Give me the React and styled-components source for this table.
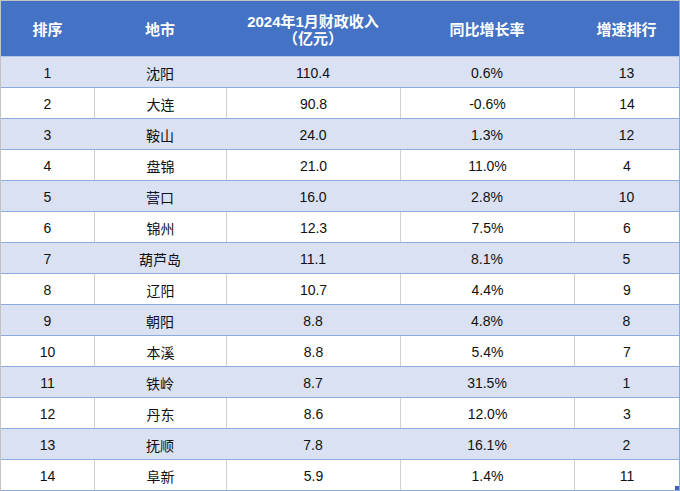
import React from "react";
import styled, { createGlobalStyle } from "styled-components";

const Global = createGlobalStyle`
  html, body { margin: 0; padding: 0; background: #ffffff; }
  body { font-family: "Liberation Sans", "Noto Sans CJK SC", sans-serif; }
`;

const COLS = "93px 132px 174px 174px 105px";

const Sheet = styled.div`
  position: relative;
  width: 680px;
  box-sizing: border-box;
  border-top: 1px solid #c3c3c3;
  border-left: 1px solid #c3c3c3;
  border-right: 1px solid #8eaadb;
`;

const HeadRow = styled.div`
  display: grid;
  grid-template-columns: ${COLS};
  height: 56px;
  box-sizing: border-box;
  background: #4472c4;
  border-bottom: 1px solid #b4c6e7;
`;

const HeadCell = styled.div`
  display: flex;
  flex-direction: column;
  align-items: center;
  justify-content: center;
  color: #ffffff;
  font-size: 15px;
  font-weight: bold;
  line-height: 17px;
  padding-top: 2px;
`;

const Row = styled.div`
  display: grid;
  grid-template-columns: ${COLS};
  height: 31px;
  box-sizing: border-box;
  background: ${(p) => (p.$shaded ? "#d9e1f2" : "#ffffff")};
  border-bottom: 1px solid #8eaadb;
`;

const Cell = styled.div`
  display: flex;
  align-items: center;
  justify-content: center;
  font-size: 14px;
  color: #111111;
  box-sizing: border-box;
  border-left: ${(p) => (p.$line ? "1px solid #d0d0d0" : "none")};
  padding-top: 1px;
`;

const Handle = styled.div`
  position: absolute;
  right: 0;
  bottom: 1px;
  width: 4px;
  height: 4px;
  background: #3f62b8;
`;

const rows = [
  [1, "沈阳", "110.4", "0.6%", 13],
  [2, "大连", "90.8", "-0.6%", 14],
  [3, "鞍山", "24.0", "1.3%", 12],
  [4, "盘锦", "21.0", "11.0%", 4],
  [5, "营口", "16.0", "2.8%", 10],
  [6, "锦州", "12.3", "7.5%", 6],
  [7, "葫芦岛", "11.1", "8.1%", 5],
  [8, "辽阳", "10.7", "4.4%", 9],
  [9, "朝阳", "8.8", "4.8%", 8],
  [10, "本溪", "8.8", "5.4%", 7],
  [11, "铁岭", "8.7", "31.5%", 1],
  [12, "丹东", "8.6", "12.0%", 3],
  [13, "抚顺", "7.8", "16.1%", 2],
  [14, "阜新", "5.9", "1.4%", 11],
];

export default function App() {
  return (
    <>
      <Global />
      <Sheet>
        <HeadRow>
          <HeadCell>排序</HeadCell>
          <HeadCell>地市</HeadCell>
          <HeadCell>
            <span>2024年1月财政收入</span>
            <span>（亿元）</span>
          </HeadCell>
          <HeadCell>同比增长率</HeadCell>
          <HeadCell>增速排行</HeadCell>
        </HeadRow>
        {rows.map((r, i) => {
          const shaded = i % 2 === 0;
          return (
            <Row key={r[0]} $shaded={shaded}>
              {r.map((v, j) => (
                <Cell key={j} $line={!shaded && j > 0}>
                  {v}
                </Cell>
              ))}
            </Row>
          );
        })}
        <Handle />
      </Sheet>
    </>
  );
}
